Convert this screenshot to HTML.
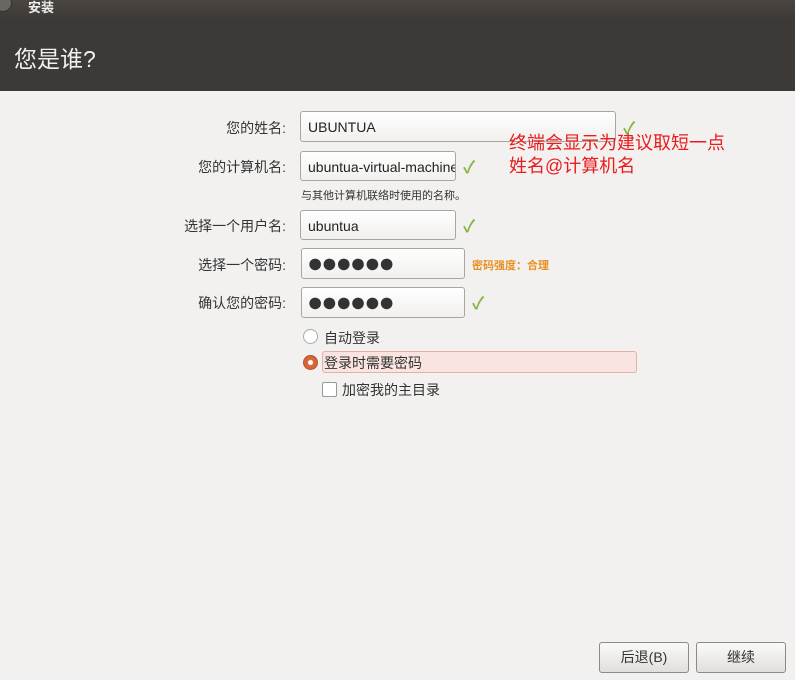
<!DOCTYPE html>
<html><head><meta charset="utf-8"><style>
body{margin:0;width:795px;height:680px;background:#f2f1f0;font-family:"Liberation Sans","Noto Sans CJK SC",sans-serif;position:relative;overflow:hidden}
.hdr{position:absolute;left:0;top:0;width:795px;height:91px;background:linear-gradient(#4a4541,#3c3936 20px,#3c3936)}
.t1{position:absolute;left:28px;top:-3px;color:#eee;font-size:13px;font-weight:bold}
.circ{position:absolute;left:-6px;top:-6px;width:16px;height:16px;border-radius:50%;background:#6a6661;border:1px solid #333}
.t2{position:absolute;left:14px;top:40px;color:#f0f0f0;font-size:23px}
.lab{position:absolute;font-size:14px;color:#333;text-align:right;width:200px}
.inp{position:absolute;height:30px;border:1px solid #a9a5a0;border-radius:3px;background:linear-gradient(#fff,#f1f0ee);box-sizing:border-box;font-size:14px;color:#222;padding:7px 7px;white-space:nowrap;overflow:hidden}
.dots{font-size:27px;letter-spacing:-2px;padding:0 5px;line-height:28px;color:#333}
.chk{position:absolute;color:#8bb545;font-size:17px;font-weight:bold}
.s{position:absolute;font-size:14px;color:#333}
.red{position:absolute;color:#e81c1c;font-size:18px;line-height:23px}
.btn{position:absolute;top:642px;height:31px;border:1px solid #8d8984;border-radius:3px;background:linear-gradient(#fafafa,#e1dfdc);box-sizing:border-box;text-align:center;font-size:14px;line-height:29px;color:#333}
</style></head><body>
<div class="hdr"><div class="circ"></div><div class="t1">安装</div><div class="t2">您是谁?</div></div>
<div class="lab" style="left:86px;top:118px">您的姓名:</div>
<div class="inp" style="left:300px;top:111px;width:316px;height:31px">UBUNTUA</div>
<div class="chk" style="left:623px;top:114px">✓</div>
<div class="red" style="left:509px;top:132px">终端会显示为建议取短一点<br>姓名@计算机名</div>
<div class="lab" style="left:86px;top:157px">您的计算机名:</div>
<div class="inp" style="left:300px;top:151px;width:156px">ubuntua-virtual-machine</div>
<div class="chk" style="left:463px;top:153px">✓</div>
<div class="s" style="left:301px;top:187px;font-size:11px">与其他计算机联络时使用的名称。</div>
<div class="lab" style="left:86px;top:216px">选择一个用户名:</div>
<div class="inp" style="left:300px;top:210px;width:156px">ubuntua</div>
<div class="chk" style="left:463px;top:212px">✓</div>
<div class="lab" style="left:86px;top:255px">选择一个密码:</div>
<div class="inp dots" style="left:301px;top:248px;width:164px;height:31px">●●●●●●</div>
<div class="s" style="left:472px;top:257px;font-size:11px;color:#e8901e;font-weight:bold">密码强度：合理</div>
<div class="lab" style="left:86px;top:293px">确认您的密码:</div>
<div class="inp dots" style="left:301px;top:287px;width:164px;height:31px">●●●●●●</div>
<div class="chk" style="left:472px;top:289px">✓</div>
<div style="position:absolute;left:303px;top:329px;width:13px;height:13px;border-radius:50%;border:1px solid #aaa;background:#fff"></div>
<div class="s" style="left:324px;top:328px">自动登录</div>
<div style="position:absolute;left:303px;top:355px;width:13px;height:13px;border-radius:50%;border:1px solid #b0532c;background:radial-gradient(#fff 2px,#d9643a 3px)"></div>
<div style="position:absolute;left:322px;top:351px;width:315px;height:22px;border:1px solid #e4b0a5;border-radius:3px;background:#f9e4e0;box-sizing:border-box"></div>
<div class="s" style="left:324px;top:353px">登录时需要密码</div>
<div style="position:absolute;left:322px;top:382px;width:13px;height:13px;border-radius:2px;border:1px solid #999;background:#fff"></div>
<div class="s" style="left:342px;top:380px">加密我的主目录</div>
<div class="btn" style="left:599px;width:90px">后退(B)</div>
<div class="btn" style="left:696px;width:90px">继续</div>
</body></html>
